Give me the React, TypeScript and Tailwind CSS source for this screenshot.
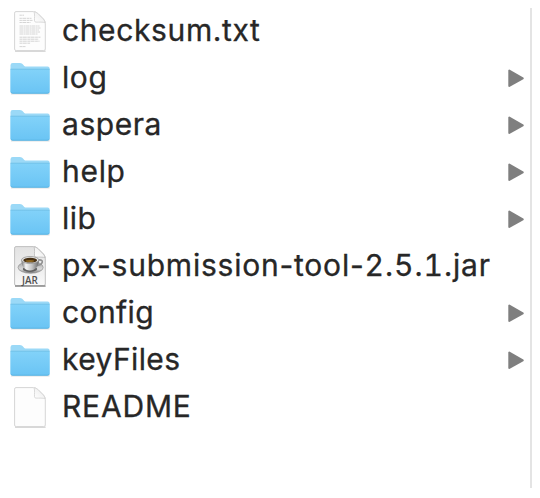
import type { ReactNode } from "react";

type Kind = "text" | "folder" | "jar" | "blank";

interface Entry {
  name: ReactNode;
  kind: Kind;
  tracking: string;
}

const entries: Entry[] = [
  { name: "checksum.txt", kind: "text", tracking: "tracking-[0.62px]" },
  { name: "log", kind: "folder", tracking: "tracking-[0.6px]" },
  { name: "aspera", kind: "folder", tracking: "tracking-[0.55px]" },
  { name: "help", kind: "folder", tracking: "tracking-[0.7px]" },
  { name: "lib", kind: "folder", tracking: "tracking-[0.5px]" },
  {
    name: (
      <>
        px-submission-tool-<span className="tabular-nums tracking-[1px]">2.5.1.</span>jar
      </>
    ),
    kind: "jar",
    tracking: "tracking-[0.78px]",
  },
  { name: "config", kind: "folder", tracking: "tracking-[0.4px]" },
  { name: "keyFiles", kind: "folder", tracking: "tracking-[0.4px]" },
  { name: "README", kind: "blank", tracking: "tracking-[0.8px]" },
];

function FolderIcon() {
  return (
    <svg width="44" height="47" viewBox="0 0 44 47">
      <defs>
        <linearGradient id="front" x1="0" y1="0" x2="0" y2="1">
          <stop offset="0" stopColor="#82d2f9" />
          <stop offset="1" stopColor="#6ac4f4" />
        </linearGradient>
      </defs>
      <path d="M3 38.8H41.5" stroke="#000" strokeOpacity=".13" strokeWidth="1.6" />
      <path d="M2.5 37V10.2q0-2.2 2.2-2.2h7.2c1.7 0 2.3.7 3.3 1.8l1.1 1.1c.6.6 1.1.7 2 .7h21.3q2 0 2 2V37z" fill="#9bd9f7" />
      <path d="M2.5 14.2H41.6V36.4q0 2-2 2H4.5q-2 0-2-2z" fill="url(#front)" />
      <path d="M2.5 14.2H41.6" stroke="#67b9e4" strokeWidth=".7" />
      <path d="M3 37.2q.5 1 1.7 1h34.6q1.4 0 1.9-1" fill="none" stroke="#57b2e2" strokeWidth=".9" />
    </svg>
  );
}

function Sheet({ jar = false }: { jar?: boolean }) {
  const edge = jar ? "#c0c0c0" : "#d6d6d6";
  return (
    <>
      <defs>
        <linearGradient id="fold" x1="0" y1="1" x2="1" y2="0">
          <stop offset="0" stopColor="#fff" />
          <stop offset=".5" stopColor="#f4f4f4" />
          <stop offset="1" stopColor="#dedede" />
        </linearGradient>
        <linearGradient id="jarPaper" x1="0" y1="0" x2="0" y2="1">
          <stop offset="0" stopColor="#e2e2e2" />
          <stop offset=".65" stopColor="#f0f0f0" />
          <stop offset="1" stopColor="#fafafa" />
        </linearGradient>
      </defs>
      <path d="M7 43.2H37.6" stroke="#000" strokeOpacity=".16" strokeWidth="1.5" />
      <path d="M8 3.6H25.4q2.6 0 4.4 1.8l5.8 5.8q1.7 1.7 1.7 4V41q0 1.6-1.6 1.6H8.2q-1.6 0-1.6-1.6V5.1q0-1.5 1.4-1.5z" fill={jar ? "url(#jarPaper)" : "#fdfdfd"} stroke={edge} strokeWidth="1" />
      <path d="M26 3.8c1 2.6.3 6.6.5 9q.1 1.2 1.4 1.3c3.2.2 7-.4 9.2.7-.4-1.6-.9-2.9-1.8-3.8l-5.5-5.5C28.700 4.500 27.500 3.900 26 3.800z" fill="url(#fold)" stroke={edge} strokeWidth=".9" />
    </>
  );
}

function BlankIcon() {
  return (
    <svg width="44" height="47" viewBox="0 0 44 47">
      <Sheet />
    </svg>
  );
}

function TextIcon() {
  return (
    <svg width="44" height="47" viewBox="0 0 44 47">
      <Sheet />
      <g fill="none" stroke="#9a9a9a" strokeWidth=".9" strokeOpacity=".45">
        <path d="M11.5 7.2h4.5M11.5 10.3h12M11.5 12.4h13M11.5 14.5h11" strokeDasharray="2.4 .5 4 .6" />
        <path d="M11.5 18h20M11.5 20h21M11.5 22h19.5M11.5 24h20.5M11.5 26h18" strokeDasharray="3.5 .5 1.8 .4" />
        <path d="M11.5 29.2h21M11.5 31.2h19M11.5 33.2h20M11.5 35.2h11M11.5 38.6h6" strokeDasharray="2.8 .4 4.1 .5" />
      </g>
    </svg>
  );
}

function JarIcon() {
  return (
    <svg width="44" height="47" viewBox="0 0 44 47">
      <defs>
        <linearGradient id="cup" x1="0" y1="0" x2="1" y2="0">
          <stop offset="0" stopColor="#777" />
          <stop offset=".25" stopColor="#f5f5f5" />
          <stop offset=".6" stopColor="#c4c4c4" />
          <stop offset="1" stopColor="#686868" />
        </linearGradient>
        <linearGradient id="saucer" x1="0" y1="0" x2="0" y2="1">
          <stop offset="0" stopColor="#a2a2a2" />
          <stop offset=".65" stopColor="#dadada" />
          <stop offset="1" stopColor="#777" />
        </linearGradient>
      </defs>
      <Sheet jar />
      <path d="M7 43H37.5" stroke="#707070" strokeWidth="1" />
      <ellipse cx="22.6" cy="24.4" rx="12.6" ry="5.9" fill="url(#saucer)" stroke="#888" strokeWidth=".6" />
      <ellipse cx="22" cy="26" rx="7.2" ry="3" fill="#626262" />
      <path d="M30 17.2c6-1.6 6 4.400-1.3 5.4" fill="none" stroke="#909090" strokeWidth="1.6" />
      <path d="M13.5 17.200c0 6 2.9 10.2 8.4 10.2s9-4.200 9-10.2z" fill="url(#cup)" />
      <ellipse cx="22.2" cy="17" rx="8.7" ry="3.5" fill="#e5e5e5" stroke="#888" strokeWidth=".7" />
      <ellipse cx="22.2" cy="17.2" rx="6.9" ry="2.4" fill="#463014" />
      <ellipse cx="21.8" cy="18" rx="4.3" ry="1.1" fill="#8b641f" />
      <text x="22" y="41" textAnchor="middle" className="font-['Open_Sans',sans-serif] text-[10.4px] font-semibold" textLength="15.8" lengthAdjust="spacingAndGlyphs" fill="#505050">
        JAR
      </text>
    </svg>
  );
}

const icons: Record<Kind, () => ReactNode> = {
  text: TextIcon,
  folder: FolderIcon,
  jar: JarIcon,
  blank: BlankIcon,
};

function Row({ name, kind, tracking }: Entry) {
  const Icon = icons[kind];
  return (
    <li className="flex h-[47px] items-center">
      <div className="w-[44px] shrink-0">
        <Icon />
      </div>
      <span className={`ml-[10px] flex-1 whitespace-nowrap pb-0.5 text-[30px] leading-[45px] text-[#272727] [-webkit-text-stroke:0.3px_#272727] ${tracking}`}>{name}</span>
      {kind === "folder" && (
        <svg className="mr-[5px] shrink-0" width="18" height="20" viewBox="0 0 18 20">
          <path d="M2.3 1.6v15.4L15.8 9.3z" fill="#7f7f7f" stroke="#7f7f7f" strokeWidth="2" strokeLinejoin="round" />
        </svg>
      )}
    </li>
  );
}

export default function App() {
  return (
    <main className="h-[498px] w-[540px] overflow-hidden bg-white pt-2 font-['Inter','Liberation_Sans',sans-serif]">
      <ul className="h-[480px] w-[532px] border-r-2 border-[#e4e4e4] pl-2">
        {entries.map((entry, i) => (
          <Row key={i} {...entry} />
        ))}
      </ul>
    </main>
  );
}
